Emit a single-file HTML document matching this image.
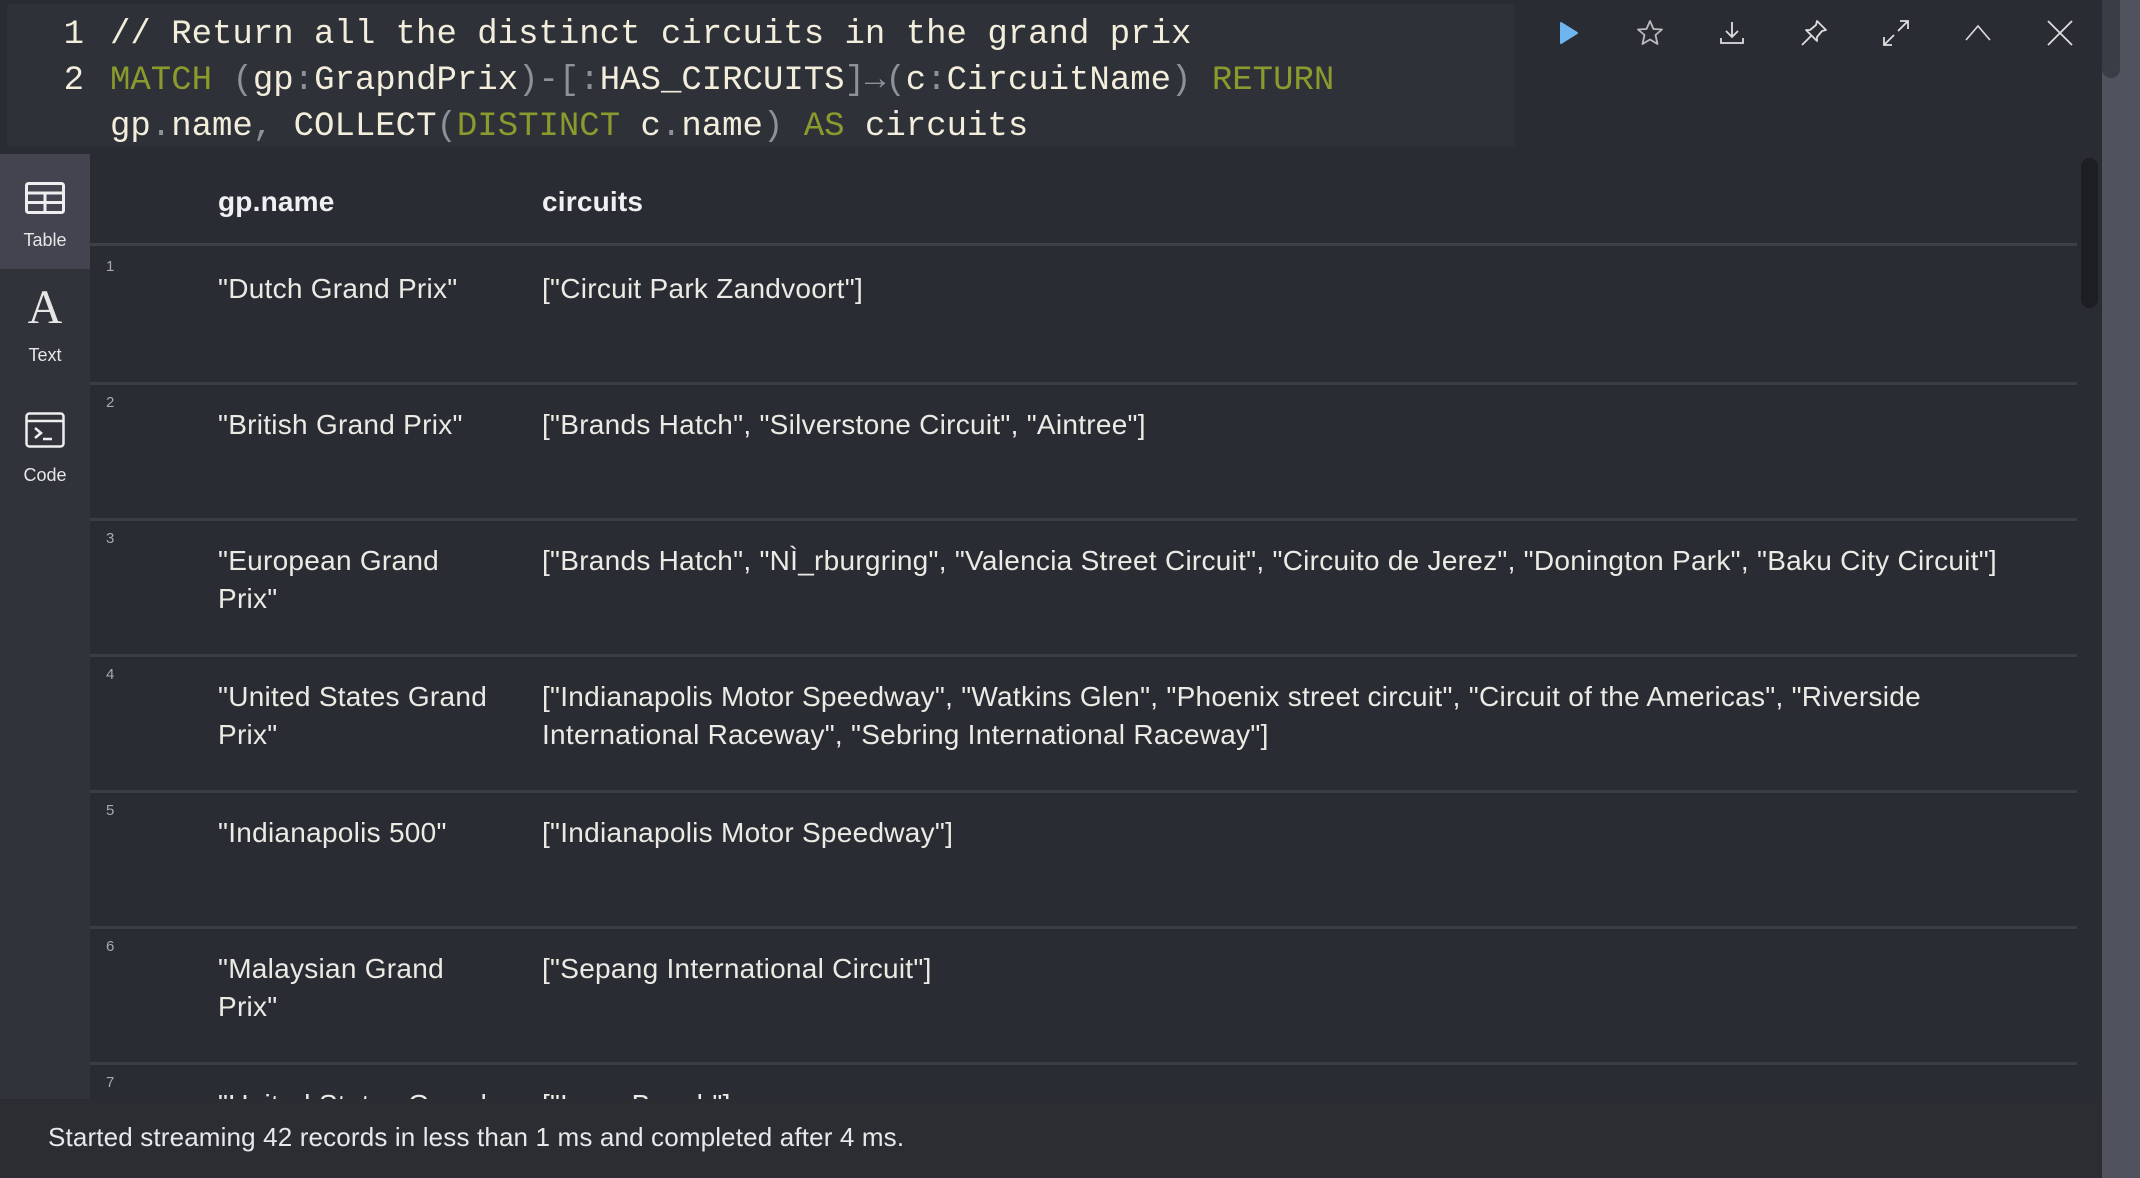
<!DOCTYPE html>
<html><head><meta charset="utf-8"><style>
*{margin:0;padding:0;box-sizing:border-box}
body{width:2140px;height:1178px;background:#292c33;overflow:hidden;font-family:"Liberation Sans",Arial,sans-serif;color:#eceae4;position:relative}
.ed{position:absolute;left:7px;top:4px;width:1508px;height:143px;background:#2f3139;border-radius:3px}
.code{position:absolute;left:0;top:8px;font-family:"Liberation Mono",monospace;font-size:34px;line-height:46px;color:#f3eedc;white-space:pre}
.ln{display:inline-block;width:103px;text-align:right;padding-right:26px;color:#f3eedc}
.k{color:#8b9a2c}.p{color:#8d9199}
.side{position:absolute;left:0;top:154px;width:90px;height:945px;background:#31333b}
.tab{position:absolute;left:0;width:90px;text-align:center;font-size:18px;color:#e6e6e6}
.tab.on{background:#43444f}
.main{position:absolute;left:90px;top:154px;width:1987px;height:945px;overflow:hidden}
.hd{position:absolute;top:0;left:0;right:0;height:92px;border-bottom:3px solid #3e4048}
.hd span{position:absolute;top:32px;font-size:28px;font-weight:bold;color:#eef0f2;letter-spacing:0.2px}
.row{position:absolute;left:0;right:0;height:136px;border-bottom:3px solid #3b3d45}
.row .n{position:absolute;left:16px;top:9px;font-size:15px;color:#a8aab0}
.row .a,.row .b{position:absolute;top:21px;font-size:28px;line-height:38px;white-space:nowrap;color:#eceae4;letter-spacing:0.27px}
.a{left:128px}.b{left:452px}
.status{position:absolute;left:0;top:1099px;width:2102px;height:79px;background:#2b2d33;font-size:26px;color:#e8e8e8;letter-spacing:0.15px}
.status span{position:absolute;left:48px;top:23px}
.sb1{position:absolute;left:2077px;top:154px;width:25px;height:945px;background:#292c33}
.sb1 div{position:absolute;left:4px;top:4px;width:17px;height:150px;background:#1d1e22;border-radius:9px}
.sb2{position:absolute;left:2102px;top:0;width:38px;height:1178px;background:#50535e}
.sb2 div{position:absolute;left:0;top:0;width:18px;height:78px;background:#3b3d46;border-radius:0 0 9px 9px}
.ic{position:absolute;top:18px;width:30px;height:30px}
</style></head><body>
<div class="ed"><div class="code"><span class="ln">1</span>// Return all the distinct circuits in the grand prix
<span class="ln">2</span><span class="k">MATCH</span> <span class="p">(</span>gp<span class="p">:</span>GrapndPrix<span class="p">)-[:</span>HAS_CIRCUITS<span class="p">]→(</span>c<span class="p">:</span>CircuitName<span class="p">)</span> <span class="k">RETURN</span>
<span class="ln"> </span>gp<span class="p">.</span>name<span class="p">,</span> COLLECT<span class="p">(</span><span class="k">DISTINCT</span> c<span class="p">.</span>name<span class="p">)</span> <span class="k">AS</span> circuits</div></div>

<svg class="ic" style="left:1553px" viewBox="0 0 30 30"><path d="M8 5 L24 15 L8 25 Z" fill="#6fb6f0" stroke="#6fb6f0" stroke-width="2" stroke-linejoin="round"/></svg>
<svg class="ic" style="left:1635px" viewBox="0 0 30 30"><path d="M15 3 L18.5 11 L27 11.5 L20.5 17 L22.5 26 L15 21.5 L7.5 26 L9.5 17 L3 11.5 L11.5 11 Z" fill="none" stroke="#bbb" stroke-width="1.8" stroke-linejoin="round"/></svg>
<svg class="ic" style="left:1717px" viewBox="0 0 30 30"><path d="M15 4 V19 M9 13 L15 19 L21 13 M4 20 V25 H26 V20" fill="none" stroke="#ddd" stroke-width="1.8"/></svg>
<svg class="ic" style="left:1799px" viewBox="0 0 30 30"><path d="M18 3 L27 12 L23 13 L18 19 L18 23 L7 12 L11 12 L17 7 Z M12 18 L3 27" fill="none" stroke="#ddd" stroke-width="1.8" stroke-linejoin="round"/></svg>
<svg class="ic" style="left:1881px" viewBox="0 0 30 30"><path d="M17 13 L27 3 M19 3 H27 V11 M13 17 L3 27 M3 19 V27 H11" fill="none" stroke="#ddd" stroke-width="1.8"/></svg>
<svg class="ic" style="left:1963px" viewBox="0 0 30 30"><path d="M3 22 L15 8 L27 22" fill="none" stroke="#ddd" stroke-width="1.6"/></svg>
<svg class="ic" style="left:2045px" viewBox="0 0 30 30"><path d="M3 3 L27 27 M27 3 L3 27" fill="none" stroke="#ddd" stroke-width="1.8"/></svg>

<div class="side">
 <div class="tab on" style="top:0;height:115px">
  <svg style="position:absolute;left:25px;top:28px" width="40" height="32" viewBox="0 0 40 32"><rect x="1.5" y="1.5" width="37" height="29" rx="2" fill="none" stroke="#eee" stroke-width="3"/><path d="M1.5 11 H38.5 M1.5 20.5 H38.5 M20 11 V30.5" stroke="#eee" stroke-width="3"/></svg>
  <div style="position:absolute;top:76px;width:90px">Table</div></div>
 <div class="tab" style="top:115px;height:120px">
  <div style="position:absolute;top:14px;width:90px;font-family:'Liberation Serif',serif;font-size:48px;line-height:50px">A</div>
  <div style="position:absolute;top:76px;width:90px">Text</div></div>
 <div class="tab" style="top:235px;height:120px">
  <svg style="position:absolute;left:25px;top:23px" width="40" height="36" viewBox="0 0 40 36"><rect x="1.5" y="1.5" width="37" height="33" rx="3" fill="none" stroke="#eee" stroke-width="2.5"/><path d="M1.5 9 H38.5 M10 16 L16 21 L10 26 M18 27 H27" fill="none" stroke="#eee" stroke-width="2.5"/></svg>
  <div style="position:absolute;top:76px;width:90px">Code</div></div>
</div>

<div class="main">
 <div class="hd"><span style="left:128px">gp.name</span><span style="left:452px">circuits</span></div>
 <div class="row" style="top:95px"><span class="n">1</span><div class="a">"Dutch Grand Prix"</div><div class="b">["Circuit Park Zandvoort"]</div></div>
 <div class="row" style="top:231px"><span class="n">2</span><div class="a">"British Grand Prix"</div><div class="b">["Brands Hatch", "Silverstone Circuit", "Aintree"]</div></div>
 <div class="row" style="top:367px"><span class="n">3</span><div class="a">"European Grand<br>Prix"</div><div class="b">["Brands Hatch", "NÌ_rburgring", "Valencia Street Circuit", "Circuito de Jerez", "Donington Park", "Baku City Circuit"]</div></div>
 <div class="row" style="top:503px"><span class="n">4</span><div class="a">"United States Grand<br>Prix"</div><div class="b">["Indianapolis Motor Speedway", "Watkins Glen", "Phoenix street circuit", "Circuit of the Americas", "Riverside<br>International Raceway", "Sebring International Raceway"]</div></div>
 <div class="row" style="top:639px"><span class="n">5</span><div class="a">"Indianapolis 500"</div><div class="b">["Indianapolis Motor Speedway"]</div></div>
 <div class="row" style="top:775px"><span class="n">6</span><div class="a">"Malaysian Grand<br>Prix"</div><div class="b">["Sepang International Circuit"]</div></div>
 <div class="row" style="top:911px;border:none"><span class="n">7</span><div class="a">"United States Grand<br>Prix"</div><div class="b">["Long Beach"]</div></div>
</div>

<div class="sb1"><div></div></div>
<div class="status"><span>Started streaming 42 records in less than 1 ms and completed after 4 ms.</span></div>
<div class="sb2"><div></div></div>
</body></html>
